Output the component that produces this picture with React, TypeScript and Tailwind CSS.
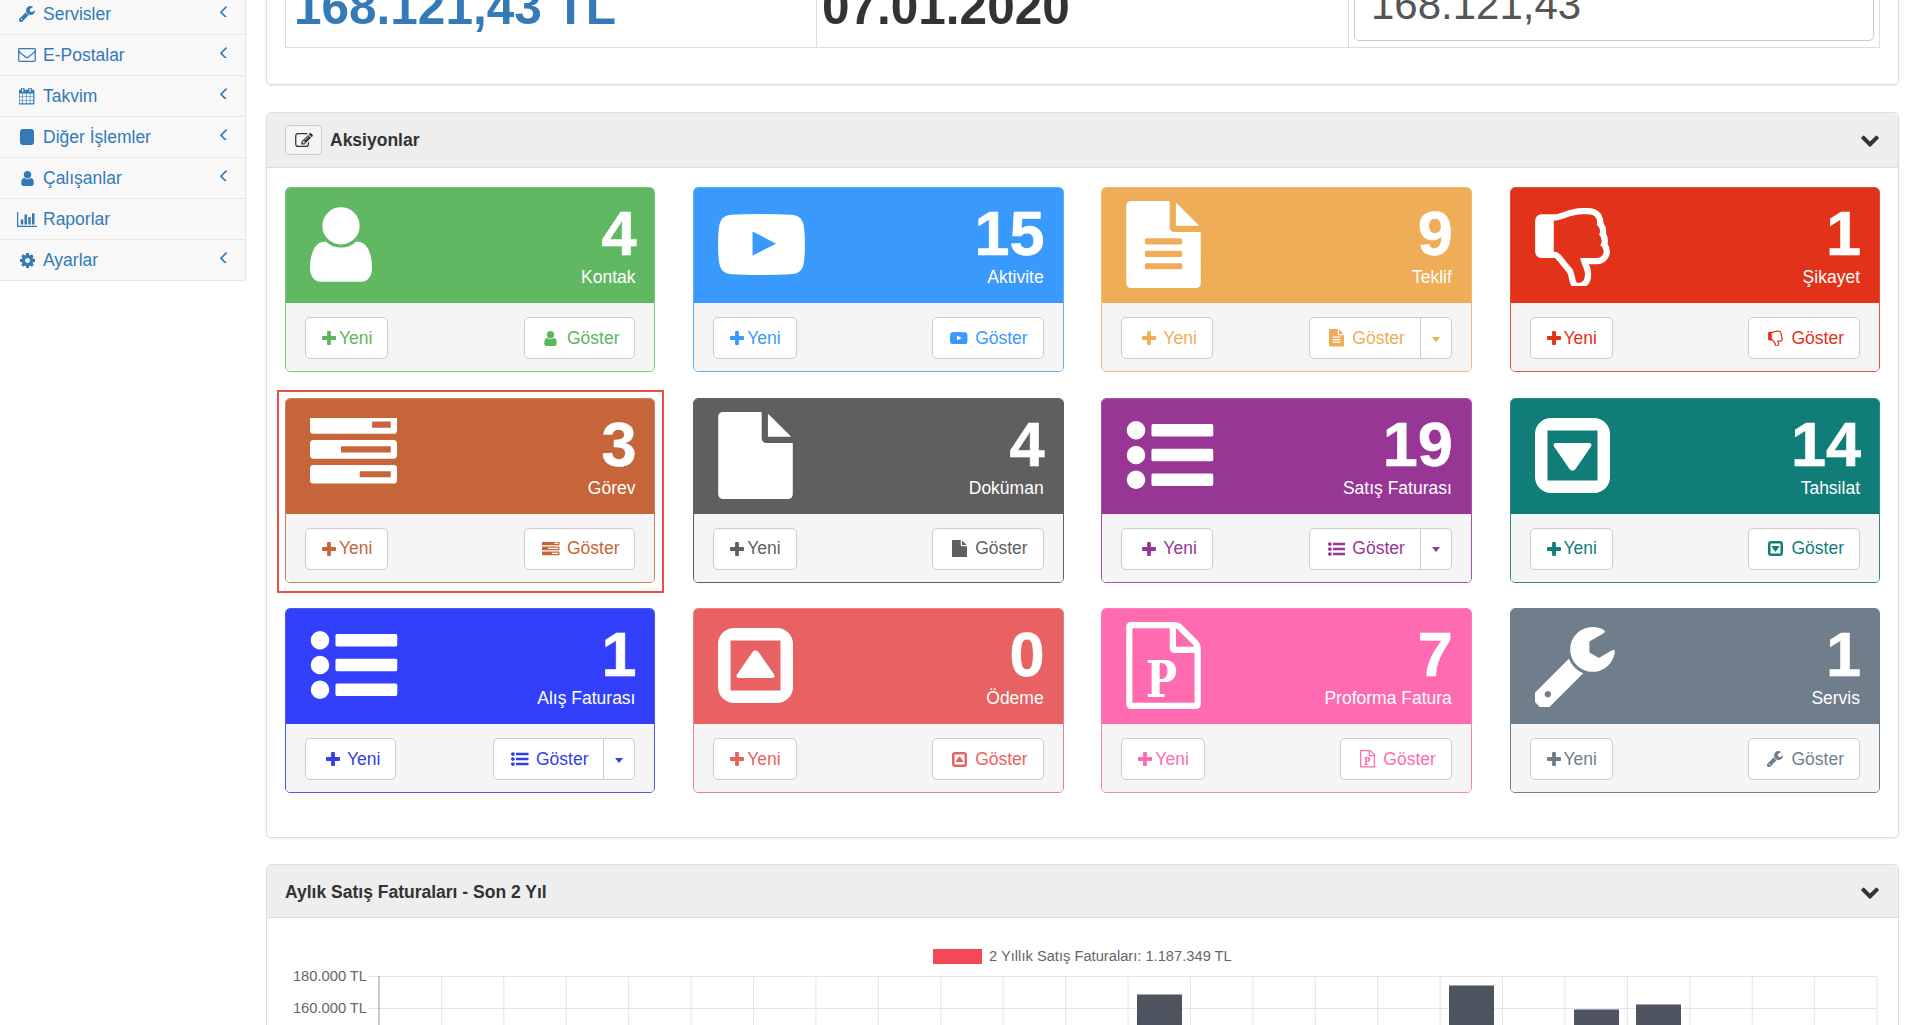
import React from "react";

const P = {
  plus: "M1600 736v192q0 40-28 68t-68 28h-416v416q0 40-28 68t-68 28h-192q-40 0-68-28t-28-68v-416h-416q-40 0-68-28t-28-68v-192q0-40 28-68t68-28h416v-416q0-40 28-68t68-28h192q40 0 68 28t28 68v416h416q40 0 68 28t28 68z",
  user: "M1536 1399q0 109-62.5 187t-150.5 78h-854q-88 0-150.5-78t-62.5-187q0-85 8.5-160.5t31.5-152 58.5-131 94-89 134.5-34.5q131 128 313 128t313-128q76 0 134.5 34.5t94 89 58.5 131 31.5 152 8.5 160.5zm-256-887q0 159-112.5 271.5t-271.5 112.5-271.5-112.5-112.5-271.5 112.5-271.5 271.5-112.5 271.5 112.5 112.5 271.5z",
  youtube: "M711 1128l484-250-484-253v503zm185-862q168 0 324.5 4.5t229.5 9.5l73 4q1 0 17 1.5t23 3 23.5 4.5 28.5 8 28 13 31 19.5 29 26.5q6 6 15.5 18.5t29 58.5 26.5 101q8 64 12.5 136.5t5.5 113.5v176q1 145-18 290-7 55-25 99.5t-32 61.5l-14 17q-14 15-29 26.5t-31 19-28 12.5-28.5 8-24 4.5-23 3-16.5 1.5q-251 19-627 19-207-2-359.5-6.5t-200.5-7.5l-49-4-36-4q-36-5-54.5-10t-51-21-56.5-41q-6-6-15.5-18.5t-29-58.5-26.5-101q-8-64-12.5-136.5t-5.5-113.5v-176q-1-145 18-290 7-55 25-99.5t32-61.5l14-17q14-15 29-26.5t31-19.5 28-13 28.5-8 23.5-4.5 23-3 17-1.5q251-18 627-18z",
  fileText: "M1596 476q14 14 28 36h-472v-472q22 14 36 28zm-476 164h544v1056q0 40-28 68t-68 28h-1344q-40 0-68-28t-28-68v-1600q0-40 28-68t68-28h800v544q0 40 28 68t68 28zm160 736v-64q0-14-9-23t-23-9h-704q-14 0-23 9t-9 23v64q0 14 9 23t23 9h704q14 0 23-9t9-23zm0-256v-64q0-14-9-23t-23-9h-704q-14 0-23 9t-9 23v64q0 14 9 23t23 9h704q14 0 23-9t9-23zm0-256v-64q0-14-9-23t-23-9h-704q-14 0-23 9t-9 23v64q0 14 9 23t23 9h704q14 0 23-9t9-23z",
  file: "M1152 512v-472q22 14 36 28l408 408q14 14 28 36h-472zm-128 32q0 40 28 68t68 28h544v1056q0 40-28 68t-68 28h-1344q-40 0-68-28t-28-68v-1600q0-40 28-68t68-28h800v544z",
  fileO: "M1596 380q28 28 48 76t20 88v1152q0 40-28 68t-68 28h-1344q-40 0-68-28t-28-68v-1600q0-40 28-68t68-28h896q40 0 88 20t76 48zm-444-244v376h376q-10-29-22-41l-313-313q-12-12-41-22zm384 1528v-1024h-416q-40 0-68-28t-28-68v-416h-768v1536h1280z",
  thumbs: "M384 448q0 26-19 45t-45 19-45-19-19-45 19-45 45-19 45 19 19 45zm1152 576q0-35-21.5-81t-53.5-47q15-17 25-47.5t10-55.5q0-69-53-119 18-32 18-69t-17.5-73.5-47.5-52.5q5-30 5-56 0-85-49-126t-136-41h-128q-131 0-342 73-5 2-29 10.5t-35.5 12.5-35 11.5-38 11-33 6.5-31.5 3h-32v640h32q16 0 35.5 9t40 27 38.5 35.5 40 44 34.5 42.5 31.5 41 23 30q55 68 77 91 41 43 59.5 109.5t30.5 125.5 38 85q96 0 128-47t32-145q0-59-48-160.5t-48-159.5h352q50 0 89-38.5t39-89.5zm128 1q0 103-76 179t-180 76h-176q48 99 48 192 0 118-35 186-35 69-102 101.5t-151 32.5q-51 0-90-37-34-33-54-82t-25.5-90.5-17.5-84.5-31-64q-48-50-107-127-101-131-137-155h-274q-53 0-90.5-37.5t-37.5-90.5v-640q0-53 37.5-90.5t90.5-37.5h288q22 0 138-40 128-44 223-66t200-22h112q140 0 226.5 79t85.5 216v5q60 77 60 178 0 22-3 43 38 67 38 144 0 36-9 69 49 69 49 157z",
  tasks: "M1024 1408h640v-128h-640v128zm-384-512h1024v-128h-1024v128zm640-512h384v-128h-384v128zm512 832v256q0 26-19 45t-45 19h-1664q-26 0-45-19t-19-45v-256q0-26 19-45t45-19h1664q26 0 45 19t19 45zm0-512v256q0 26-19 45t-45 19h-1664q-26 0-45-19t-19-45v-256q0-26 19-45t45-19h1664q26 0 45 19t19 45zm0-512v256q0 26-19 45t-45 19h-1664q-26 0-45-19t-19-45v-256q0-26 19-45t45-19h1664q26 0 45 19t19 45z",
  list: "M384 1408q0 80-56 136t-136 56-136-56-56-136 56-136 136-56 136 56 56 136zm0-512q0 80-56 136t-136 56-136-56-56-136 56-136 136-56 136 56 56 136zm1408 416v192q0 13-9.5 22.5t-22.5 9.5h-1216q-13 0-22.5-9.5t-9.5-22.5v-192q0-13 9.5-22.5t22.5-9.5h1216q13 0 22.5 9.5t9.5 22.5zm-1408-928q0 80-56 136t-136 56-136-56-56-136 56-136 136-56 136 56 56 136zm1408 416v192q0 13-9.5 22.5t-22.5 9.5h-1216q-13 0-22.5-9.5t-9.5-22.5v-192q0-13 9.5-22.5t22.5-9.5h1216q13 0 22.5 9.5t9.5 22.5zm0-512v192q0 13-9.5 22.5t-22.5 9.5h-1216q-13 0-22.5-9.5t-9.5-22.5v-192q0-13 9.5-22.5t22.5-9.5h1216q13 0 22.5 9.5t9.5 22.5z",
  wrench: "M448 1472q0-26-19-45t-45-19-45 19-19 45 19 45 45 19 45-19 19-45zm644-420l-682 682q-37 37-90 37-52 0-90-37l-106-108q-38-36-38-90 0-53 38-91l681-681q39 98 114.5 173.5t173.5 114.5zm634-435q0 39-23 106-47 134-164.5 217.5t-258.5 83.5q-185 0-316.5-131.5t-131.5-316.5 131.5-316.5 316.5-131.5q58 0 121.5 16.5t107.5 46.5q16 11 16 28t-16 28l-293 169v224l193 107q5-3 79-48.5t135.5-81 70.5-35.5q15 0 23.5 10t8.5 25z",
  envelope: "M1664 1504v-768q-32 36-69 66-268 206-426 338-51 43-83 67t-86.5 48.5-102.5 24.5h-2q-48 0-102.5-24.5t-86.5-48.5-83-67q-158-132-426-338-37-30-69-66v768q0 13 9.5 22.5t22.5 9.5h1472q13 0 22.5-9.5t9.5-22.5zm0-1051v-24.5l-.5-13-3-12.5-5.5-9-9-7.5-14-2.5h-1472q-13 0-22.5 9.5t-9.5 22.5q0 168 147 284 193 152 401 317 6 5 35 29.5t46 37.5 44.5 31.5 50.5 27.5 43 9h2q20 0 43-9t50.5-27.5 44.5-31.5 46-37.5 35-29.5q208-165 401-317 54-43 100.5-115.5t46.5-131.5zm128-37v1088q0 66-47 113t-113 47h-1472q-66 0-113-47t-47-113v-1088q0-66 47-113t113-47h1472q66 0 113 47t47 113z",
  calendar: "M192 1664h288v-288h-288v288zm352 0h320v-288h-320v288zm-352-352h288v-320h-288v320zm352 0h320v-320h-320v320zm-352-384h288v-288h-288v288zm736 736h320v-288h-320v288zm-384-736h320v-288h-320v288zm768 736h288v-288h-288v288zm-384-352h320v-320h-320v320zm-352-864v-288q0-13-9.5-22.5t-22.5-9.5h-64q-13 0-22.5 9.5t-9.5 22.5v288q0 13 9.5 22.5t22.5 9.5h64q13 0 22.5-9.5t9.5-22.5zm736 864h288v-320h-288v320zm-384-384h320v-288h-320v288zm384 0h288v-288h-288v288zm32-480v-288q0-13-9.5-22.5t-22.5-9.5h-64q-13 0-22.5 9.5t-9.5 22.5v288q0 13 9.5 22.5t22.5 9.5h64q13 0 22.5-9.5t9.5-22.5zm384-64v1280q0 52-38 90t-90 38h-1408q-52 0-90-38t-38-90v-1280q0-52 38-90t90-38h128v-96q0-66 47-113t113-47h64q66 0 113 47t47 113v96h384v-96q0-66 47-113t113-47h64q66 0 113 47t47 113v96h128q52 0 90 38t38 90z",
  bars: "M640 896v512h-256v-512h256zm384-512v1024h-256v-1024h256zm1024 1152v128h-2048v-1536h128v1408h1920zm-640-896v768h-256v-768h256zm384-384v1152h-256v-1152h256z",
  cog: "M1152 896q0-106-75-181t-181-75-181 75-75 181 75 181 181 75 181-75 75-181zm512-109v222q0 12-8 23t-20 13l-185 28q-19 54-39 91 35 50 107 138 10 12 10 25t-9 23q-27 37-99 108t-94 71q-12 0-26-9l-138-108q-44 23-91 38-16 136-29 186-7 28-36 28h-222q-14 0-24.5-8.5t-11.5-21.5l-28-184q-49-16-90-37l-141 107q-10 9-25 9-14 0-25-11-126-114-165-168-7-10-7-23 0-12 8-23 15-21 51-66.5t54-70.5q-27-50-41-99l-183-27q-13-2-21-12.5t-8-23.5v-222q0-12 8-23t19-13l186-28q14-46 39-92-40-57-107-138-10-12-10-24 0-10 9-23 26-36 98.5-107.5t94.5-71.5q13 0 26 10l138 107q44-23 91-38 16-136 29-186 7-28 36-28h222q14 0 24.5 8.5t11.5 21.5l28 184q49 16 90 37l142-107q9-9 24-9 13 0 25 10 129 119 165 170 7 8 7 22 0 12-8 23-15 21-51 66.5t-54 70.5q26 50 41 98l183 28q13 2 21 12.5t8 23.5z",
  edit: "M888 1184l116-116-152-152-116 116v56h96v96h56zm440-720q-16-16-33 1l-350 350q-17 17-1 33t33-1l350-350q17-17 1-33zm80 594v190q0 119-84.5 203.5t-203.5 84.5h-832q-119 0-203.5-84.5t-84.5-203.5v-832q0-119 84.5-203.5t203.5-84.5h832q63 0 117 25 15 7 18 23 3 17-9 29l-49 49q-14 14-32 8-23-6-45-6h-832q-66 0-113 47t-47 113v832q0 66 47 113t113 47h832q66 0 113-47t47-113v-126q0-13 9-22l64-64q15-15 35-7t20 29zm-96-738l288 288-672 672h-288v-288zm444 132l-92 92-288-288 92-92q28-28 68-28t68 28l152 152q28 28 28 68t-28 68z",
  chevronDown: "M1683 808l-742 741q-19 19-45 19t-45-19l-742-741q-19-19-19-45.5t19-45.5l166-165q19-19 45-19t45 19l531 531 531-531q19-19 45-19t45 19l166 165q19 19 19 45.5t-19 45.5z",
  angleLeft: "M1203 544q0 13-10 23l-393 393 393 393q10 10 10 23t-10 23l-50 50q-10 10-23 10t-23-10l-466-466q-10-10-10-23t10-23l466-466q10-10 23-10t23 10l50 50q10 10 10 23z",
};

type IconKey = "user" | "youtube" | "fileText" | "thumbs" | "tasks" | "file" | "list" | "caretDown" | "caretUp" | "fileP" | "wrench";

function Glyph({ name, className }: { name: IconKey; className: string }) {
  const common = { className, fill: "currentColor", xmlns: "http://www.w3.org/2000/svg" };
  switch (name) {
    case "user":
      return <svg {...common} viewBox="256 128 1280 1536"><path d={P.user} /></svg>;
    case "youtube":
      return <svg {...common} viewBox="0 266 1792 1260"><path d={P.youtube} /></svg>;
    case "fileText":
      return <svg {...common} viewBox="128 0 1536 1792"><path d={P.fileText} /></svg>;
    case "file":
      return <svg {...common} viewBox="128 0 1536 1792"><path d={P.file} /></svg>;
    case "thumbs":
      return <svg {...common} viewBox="128 64 1536 1664"><path d={P.thumbs} /></svg>;
    case "tasks":
      return <svg {...common} viewBox="0 192 1792 1408"><path d={P.tasks} fillRule="evenodd" /></svg>;
    case "list":
      return <svg {...common} viewBox="0 192 1792 1408"><path d={P.list} /></svg>;
    case "wrench":
      return <svg {...common} viewBox="128 128 1600 1600"><path d={P.wrench} /></svg>;
    case "fileP":
      return (
        <svg {...common} viewBox="128 0 1536 1792">
          <path d={P.fileO} />
          <text x="536" y="1540" fontFamily="'DejaVu Serif', serif" fontWeight="700" fontSize="1040" textLength="640" lengthAdjust="spacingAndGlyphs">P</text>
        </svg>
      );
    case "caretDown":
    case "caretUp":
      return (
        <svg {...common} viewBox="0 0 75 75">
          <g transform={name === "caretUp" ? "rotate(180 37.5 37.5)" : undefined}>
            <path fillRule="evenodd" d="M16 0H59A16 16 0 0 1 75 16V59A16 16 0 0 1 59 75H16A16 16 0 0 1 0 59V16A16 16 0 0 1 16 0ZM12.5 12.5V62.5H62.5V12.5Z" />
            <path d="M21 25H54Q57.5 25 56 28.500L40.500 51Q37.500 54.500 34.500 51L19 28.500Q17.500 25 21 25Z" />
          </g>
        </svg>
      );
  }
}

function Plus({ className }: { className: string }) {
  return <svg viewBox="192 128 1408 1408" fill="currentColor" className={className}><path d={P.plus} /></svg>;
}

const big: Record<IconKey, string> = {
  user: "ml-6 mt-[19px] w-[62px] h-[75px]",
  youtube: "ml-6 mt-[26px] w-[87px] h-[61px]",
  fileText: "ml-6 mt-[13px] w-[75px] h-[87px]",
  file: "ml-6 mt-[13px] w-[75px] h-[87px]",
  thumbs: "ml-6 mt-[17px] w-[75px] h-[81px]",
  tasks: "ml-6 mt-[19px] w-[87px] h-[69px]",
  list: "ml-6 mt-[22px] w-[88px] h-[68px]",
  caretDown: "ml-6 mt-[19px] w-[75px] h-[75px]",
  caretUp: "ml-6 mt-[19px] w-[75px] h-[75px]",
  fileP: "ml-6 mt-[13px] w-[75px] h-[87px]",
  wrench: "ml-6 mt-[18px] w-[80px] h-[80px]",
};

const small: Record<IconKey, string> = {
  user: "w-[13px] h-[15px]",
  youtube: "w-[17.5px] h-[12.5px]",
  fileText: "w-[15px] h-[17.5px]",
  file: "w-[15px] h-[17.5px]",
  thumbs: "w-[15px] h-[16px]",
  tasks: "w-[17.5px] h-[14px]",
  list: "w-[17.5px] h-[14px]",
  caretDown: "w-[15px] h-[15px]",
  caretUp: "w-[15px] h-[15px]",
  fileP: "w-[15px] h-[17.5px]",
  wrench: "w-[16px] h-[16px]",
};

type Card = {
  n: string;
  label: string;
  icon: IconKey;
  bg: string;
  text: string;
  border: string;
  fw?: boolean;
  caret?: boolean;
  highlight?: boolean;
};

const cards: Card[] = [
  { n: "4", label: "Kontak", icon: "user", bg: "bg-[#61b862]", text: "text-[#5cb65d]", border: "border-[#7cc47d]" },
  { n: "15", label: "Aktivite", icon: "youtube", bg: "bg-[#3a99fc]", text: "text-[#3a99fc]", border: "border-[#64aeee]" },
  { n: "9", label: "Teklif", icon: "fileText", bg: "bg-[#efad57]", text: "text-[#efad57]", border: "border-[#f0ba76]", fw: true, caret: true },
  { n: "1", label: "Şikayet", icon: "thumbs", bg: "bg-[#e23219]", text: "text-[#e23219]", border: "border-[#e2513d]" },
  { n: "3", label: "Görev", icon: "tasks", bg: "bg-[#c66539]", text: "text-[#c66539]", border: "border-[#d0805c]", highlight: true },
  { n: "4", label: "Doküman", icon: "file", bg: "bg-[#5f5f5f]", text: "text-[#5f5f5f]", border: "border-[#5f5f5f]" },
  { n: "19", label: "Satış Faturası", icon: "list", bg: "bg-[#983695]", text: "text-[#983695]", border: "border-[#a655a3]", fw: true, caret: true },
  { n: "14", label: "Tahsilat", icon: "caretDown", bg: "bg-[#117d79]", text: "text-[#117d79]", border: "border-[#2a8a86]" },
  { n: "1", label: "Alış Faturası", icon: "list", bg: "bg-[#3340fb]", text: "text-[#3340e8]", border: "border-[#4c58e8]", fw: true, caret: true },
  { n: "0", label: "Ödeme", icon: "caretUp", bg: "bg-[#e86264]", text: "text-[#e86264]", border: "border-[#ec7f80]" },
  { n: "7", label: "Proforma Fatura", icon: "fileP", bg: "bg-[#ff6bb0]", text: "text-[#ff6bb0]", border: "border-[#fb7fb9]" },
  { n: "1", label: "Servis", icon: "wrench", bg: "bg-[#707e8c]", text: "text-[#707e8c]", border: "border-[#707e8c]" },
];

function ActionCard({ c }: { c: Card }) {
  return (
    <div className="relative">
      {c.highlight && <div className="absolute -left-2 -right-[9px] -top-2 -bottom-[10px] border-2 border-[#ec4d45]" />}
      <div className={`relative border ${c.border} rounded-[5px] overflow-hidden h-[185px]`}>
        <div className={`${c.bg} h-[115px] flex justify-between text-white`}>
          <Glyph name={c.icon} className={big[c.icon]} />
          <div className="pr-[19px] pt-[13px] text-right">
            <div className="text-[63px] h-16 leading-16 font-bold -mr-px [-webkit-text-stroke:0.6px_#ffffff]">{c.n}</div>
            <div className="text-[17.5px] leading-5 mt-[2px]">{c.label}</div>
          </div>
        </div>
        <div className={`bg-[#f5f5f5] h-[68px] px-[19px] flex justify-between items-start pt-[14px] text-[17.5px] ${c.text}`}>
          <div className="h-[42px] pl-4 pr-[15px] bg-white border border-[#ccc] rounded-[5px] flex items-center gap-[3px]">
            {c.fw ? (
              <span className="w-[22px] flex justify-center"><Plus className="w-[14px] h-[14px]" /></span>
            ) : (
              <Plus className="w-[14px] h-[14px]" />
            )}
            <span>Yeni</span>
          </div>
          <div className="h-[42px] bg-white border border-[#ccc] rounded-[5px] flex items-stretch">
            <div className="px-[15px] flex items-center gap-[5px]">
              <span className="w-[22px] flex justify-center"><Glyph name={c.icon} className={small[c.icon]} /></span>
              <span>Göster</span>
            </div>
            {c.caret && (
              <div className="w-[31px] border-l border-[#ccc] flex items-center justify-center">
                <span className="w-0 h-0 border-x-[4.5px] border-x-transparent border-t-[5px] border-t-current mt-[2px]" />
              </div>
            )}
          </div>
        </div>
      </div>
    </div>
  );
}

const nav: { label: string; icon: React.ReactNode; arrow: boolean }[] = [
  { label: "Servisler", arrow: true, icon: <svg viewBox="128 128 1600 1600" fill="currentColor" className="w-4 h-4"><path d={P.wrench} /></svg> },
  { label: "E-Postalar", arrow: true, icon: <svg viewBox="0 256 1792 1408" fill="currentColor" className="w-[18px] h-[14px]"><path d={P.envelope} /></svg> },
  { label: "Takvim", arrow: true, icon: <svg viewBox="128 128 1664 1664" fill="currentColor" className="w-4 h-[17px]"><path d={P.calendar} fillRule="evenodd" /></svg> },
  { label: "Diğer İşlemler", arrow: true, icon: <span className="block w-[14.5px] h-4 rounded-[3px] bg-current" /> },
  { label: "Çalışanlar", arrow: true, icon: <svg viewBox="256 128 1280 1536" fill="currentColor" className="w-[13px] h-[15px]"><path d={P.user} /></svg> },
  { label: "Raporlar", arrow: false, icon: <svg viewBox="0 128 2048 1536" fill="currentColor" className="w-5 h-[15px]"><path d={P.bars} /></svg> },
  { label: "Ayarlar", arrow: true, icon: <svg viewBox="128 128 1536 1536" fill="currentColor" className="w-[15px] h-[15px]"><path d={P.cog} /></svg> },
];

function Chevron() {
  return <svg viewBox="100 400 1592 1180" fill="currentColor" className="w-[18px] h-[13px] text-[#333]"><path d={P.chevronDown} /></svg>;
}

function Chart() {
  const vs = Array.from({ length: 25 }, (_, i) => 379 + i * 62.42);
  const bars = [
    { x: 1137, y: 994 },
    { x: 1449, y: 985 },
    { x: 1574, y: 1009 },
    { x: 1636, y: 1004 },
  ];
  return (
    <svg viewBox="267 918 1631 200" className="block w-[1631px] h-[200px]" fontFamily="'Liberation Sans', Arial, sans-serif">
      <rect x="933" y="949" width="49" height="15" fill="#f44854" />
      <text x="989" y="961" fontSize="14.7" fill="#666">2 Yıllık Satış Faturaları: 1.187.349 TL</text>
      {[976, 1008, 1040].map((y) => <line key={y} x1="369" x2="1877" y1={y + 0.5} y2={y + 0.5} stroke="#e5e5e5" />)}
      {vs.map((x, i) => <line key={i} x1={x} x2={x} y1="976" y2="1118" stroke={i === 0 ? "#999" : "#e5e5e5"} />)}
      <text x="367" y="981" textAnchor="end" fontSize="14.7" fill="#666">180.000 TL</text>
      <text x="367" y="1013" textAnchor="end" fontSize="14.7" fill="#666">160.000 TL</text>
      {bars.map((b) => (
        <g key={b.x}>
          <rect x={b.x} y={b.y} width="45" height="140" fill="#4f5461" />
          <rect x={b.x} y={b.y} width="45" height="1" fill="#a3a6ae" />
        </g>
      ))}
    </svg>
  );
}

export default function App() {
  return (
    <div className="w-[1920px] h-[1025px] overflow-hidden bg-white flex items-start font-['Liberation_Sans',Arial,sans-serif] text-[17.5px] text-[#333]">
      <aside className="w-[246px] shrink-0 -mt-[6px] bg-[#f8f8f8] border-r border-[#e7e7e7] text-[#337ab7]">
        {nav.map((r) => (
          <div key={r.label} className="h-[41px] border-b border-[#e7e7e7] flex items-center pl-[17px]">
            <span className="w-5 flex justify-center shrink-0">{r.icon}</span>
            <span className="ml-[6px]">{r.label}</span>
            {r.arrow && (
              <svg viewBox="627 448 576 896" fill="currentColor" className="ml-auto mr-[18px] -mt-[6px] w-[7px] h-[11px]"><path d={P.angleLeft} /></svg>
            )}
          </div>
        ))}
      </aside>

      <main className="ml-5 w-[1633px] shrink-0 -mt-[52px] flex flex-col gap-[27px]">
        <section className="h-[137px] border border-[#ddd] rounded-[5px] shadow-[0_1px_2px_rgba(0,0,0,0.08)] px-[18px] pt-[18px]">
          <div className="grid grid-cols-[531px_532px_1fr] h-[81px] border border-[#ddd] w-[1595px]">
            <div className="border-r border-[#ddd] flex items-end pl-2 pb-4 text-[49.5px] leading-none font-bold text-[#337ab7]">168.121,43 TL</div>
            <div className="border-r border-[#ddd] flex items-end pl-[5px] pb-4 text-[49.5px] leading-none font-bold text-[#333]">07.01.2020</div>
            <div className="flex items-end px-[5px] pb-[6px]">
              <div className="w-full h-[70px] bg-white border border-[#ccc] rounded-[5px] pl-4 flex items-end pb-[14px] text-[42px] leading-none text-[#555]">168.121,43</div>
            </div>
          </div>
        </section>

        <section className="h-[726px] border border-[#ddd] rounded-[5px] shadow-[0_1px_2px_rgba(0,0,0,0.08)]">
          <header className="h-[55px] bg-[#eeeeee] border-b border-[#ddd] rounded-t-[5px] flex items-center pl-[18px] pr-[19px]">
            <span className="w-[37px] h-[30px] border border-[#ccc] bg-[#f5f5f5] rounded-[4px] flex items-center justify-center">
              <svg viewBox="0 128 1792 1408" fill="currentColor" className="w-[18px] h-[14px]"><path d={P.edit} /></svg>
            </span>
            <span className="ml-[8px] font-bold">Aksiyonlar</span>
            <span className="ml-auto"><Chevron /></span>
          </header>
          <div className="px-[18px] pt-[19px] grid grid-cols-4 gap-x-[37.7px] gap-y-[25.5px]">
            {cards.map((c) => <ActionCard key={c.label} c={c} />)}
          </div>
        </section>

        <section className="border border-[#ddd] rounded-[5px] -mt-[1px]">
          <header className="h-[53px] pt-[3px] bg-[#eeeeee] border-b border-[#ddd] rounded-t-[5px] flex items-center pl-[18px] pr-[19px]">
            <span className="font-bold">Aylık Satış Faturaları - Son 2 Yıl</span>
            <span className="ml-auto"><Chevron /></span>
          </header>
          <Chart />
        </section>
      </main>
    </div>
  );
}
